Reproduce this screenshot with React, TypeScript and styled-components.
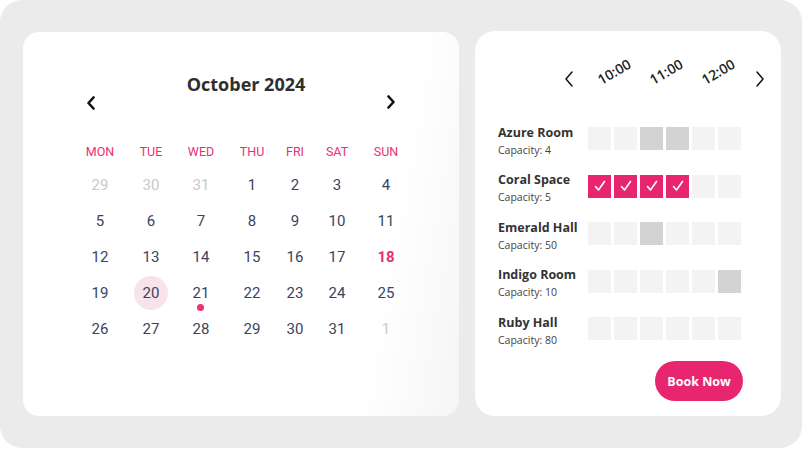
import styled, { createGlobalStyle } from "styled-components";

const GlobalStyle = createGlobalStyle`
  body {
    margin: 0;
    background: #ffffff;
  }
`;

const PINK = "#e8266f";

const Shell = styled.div`
  width: 802px;
  height: 448px;
  box-sizing: border-box;
  background: #ebebeb;
  border-radius: 22px;
  padding: 32px 0 0 23px;
  display: flex;
  align-items: flex-start;
  gap: 16px;
`;

/* ---------- calendar ---------- */

const CalendarCard = styled.section`
  width: 436px;
  height: 384px;
  box-sizing: border-box;
  border-radius: 16px;
  background: linear-gradient(100deg, #ffffff 80%, #f5f5f5 100%);
  padding: 41px 0 0 52px;
`;

const MonthHeader = styled.div`
  width: 312px;
  display: grid;
  grid-template-columns: 12px 1fr 12px;
  margin-left: 10px;
`;

const MonthTitle = styled.h2`
  margin: 0;
  padding-left: 10px;
  text-align: center;
  font-family: "Open Sans", sans-serif;
  font-weight: 700;
  font-size: 18px;
  line-height: 22px;
  color: #2e2e2e;
`;

const NavButton = styled.button<{ $top: number }>`
  border: 0;
  background: none;
  padding: 0;
  margin-top: ${(p) => p.$top}px;
  width: 12px;
  height: 14px;
  display: flex;
  align-items: center;
  justify-content: center;
  cursor: pointer;
`;

const DayGrid = styled.div`
  display: grid;
  grid-template-columns: 50px 52px 48px 54px 32px 52px 46px;
  grid-template-rows: 32px repeat(5, 36px);
  margin-top: 25px;
`;

const Weekday = styled.div`
  display: flex;
  align-items: center;
  justify-content: center;
  font-family: Roboto, sans-serif;
  font-size: 12.5px;
  color: #ec2f72;
`;

const Day = styled.div<{ $muted?: boolean; $today?: boolean; $selected?: boolean }>`
  position: relative;
  display: flex;
  align-items: center;
  justify-content: center;
  font-family: Roboto, sans-serif;
  font-size: 15px;
  font-weight: ${(p) => (p.$today ? 700 : 400)};
  color: ${(p) => (p.$today ? "#ec2f72" : p.$muted ? "#c9c9cc" : "#3c4361")};

  &::before {
    content: "";
    display: ${(p) => (p.$selected ? "block" : "none")};
    position: absolute;
    width: 34px;
    height: 34px;
    border-radius: 50%;
    background: #f8e2ec;
    left: 50%;
    top: 50%;
    transform: translate(-50%, -50%);
  }

  span {
    position: relative;
  }
`;

const EventDot = styled.i`
  position: absolute;
  left: 50%;
  top: 29px;
  width: 7px;
  height: 7px;
  margin-left: -4px;
  border-radius: 50%;
  background: #ec2f72;
`;

/* ---------- rooms ---------- */

const RoomsCard = styled.section`
  width: 306px;
  height: 385px;
  box-sizing: border-box;
  border-radius: 20px;
  background: #ffffff;
  padding: 27px 16px 0 23px;
  font-family: "Open Sans", sans-serif;
  margin-top: -1px;
`;

const TimeHeader = styled.div`
  height: 40px;
  display: flex;
  align-items: center;
  padding-left: 65px;

  svg {
    flex-shrink: 0;
    margin-top: 2px;
  }
`;

const TimeLabel = styled.div`
  width: 52px;
  text-align: center;
  font-size: 14px;
  font-weight: 600;
  color: #1f1f1f;
  transform: translateY(-7px) rotate(-30deg);
`;

const Slots = styled.div`
  display: flex;
  margin: 0 10px 0 13px;
`;

const RoomList = styled.div`
  display: grid;
  row-gap: 14.5px;
  margin-top: 25.5px;
`;

const RoomRow = styled.div`
  display: flex;
  align-items: flex-start;
`;

const RoomInfo = styled.div`
  width: 90px;
  display: flex;
  flex-direction: column;
  gap: 2px;
`;

const RoomName = styled.div`
  font-size: 12.5px;
  line-height: 17px;
  font-weight: 700;
  color: #333333;
  white-space: nowrap;
`;

const Capacity = styled.div`
  font-size: 10.5px;
  line-height: 14px;
  color: #444444;
`;

const Cells = styled.div`
  display: flex;
  gap: 3px;
  margin-top: 3.5px;
`;

const Cell = styled.div<{ $state: SlotState }>`
  width: 23px;
  height: 23px;
  background: ${(p) => (p.$state === "picked" ? PINK : p.$state === "busy" ? "#d3d3d3" : "#f3f3f3")};
  display: flex;
  align-items: center;
  justify-content: center;
`;

const Footer = styled.div`
  display: flex;
  justify-content: flex-end;
  margin: 14.5px 22px 0 0;
`;

const BookButton = styled.button`
  width: 88px;
  height: 40px;
  border: 0;
  border-radius: 20px;
  background: ${PINK};
  color: #ffffff;
  font-family: "Open Sans", sans-serif;
  font-weight: 700;
  font-size: 12.5px;
  cursor: pointer;
`;

const Chevron = ({ dir, thin }: { dir: "left" | "right"; thin?: boolean }) =>
  thin ? (
    <svg width="12" height="18" viewBox="0 0 12 18" fill="none">
      <path
        d={dir === "left" ? "M9 2 3 9l6 7" : "M3 2l6 7-6 7"}
        stroke="#111"
        strokeWidth="1.5"
        strokeLinecap="round"
        strokeLinejoin="round"
      />
    </svg>
  ) : (
    <svg width="10" height="14" viewBox="0 0 10 14" fill="none">
      <path
        d={dir === "left" ? "M7.5 1.5 2.5 7l5 5.5" : "M2.5 1.5 7.5 7l-5 5.5"}
        stroke="#111"
        strokeWidth="2.6"
        strokeLinecap="round"
        strokeLinejoin="round"
      />
    </svg>
  );

const Check = () => (
  <svg width="14" height="14" viewBox="0 0 14 14" fill="none">
    <path d="M2.5 7.5 5.5 11 11.5 2.5" stroke="#fff" strokeWidth="1.6" strokeLinecap="round" strokeLinejoin="round" />
  </svg>
);

const weekdays = ["MON", "TUE", "WED", "THU", "FRI", "SAT", "SUN"];

const days: { n: number; muted?: boolean }[] = [
  { n: 29, muted: true },
  { n: 30, muted: true },
  { n: 31, muted: true },
  ...Array.from({ length: 31 }, (_, i) => ({ n: i + 1 })),
  { n: 1, muted: true },
];

type SlotState = "free" | "busy" | "picked";

interface Room {
  name: string;
  capacity: number;
  slots: SlotState[];
}

const rooms: Room[] = [
  { name: "Azure Room", capacity: 4, slots: ["free", "free", "busy", "busy", "free", "free"] },
  { name: "Coral Space", capacity: 5, slots: ["picked", "picked", "picked", "picked", "free", "free"] },
  { name: "Emerald Hall", capacity: 50, slots: ["free", "free", "busy", "free", "free", "free"] },
  { name: "Indigo Room", capacity: 10, slots: ["free", "free", "free", "free", "free", "busy"] },
  { name: "Ruby Hall", capacity: 80, slots: ["free", "free", "free", "free", "free", "free"] },
];

export default function App() {
  return (
    <>
      <GlobalStyle />
      <Shell>
        <CalendarCard>
          <MonthHeader>
            <NavButton $top={23}>
              <Chevron dir="left" />
            </NavButton>
            <MonthTitle>October 2024</MonthTitle>
            <NavButton $top={22}>
              <Chevron dir="right" />
            </NavButton>
          </MonthHeader>
          <DayGrid>
            {weekdays.map((w) => (
              <Weekday key={w}>{w}</Weekday>
            ))}
            {days.map((d, i) => (
              <Day key={i} $muted={d.muted} $today={!d.muted && d.n === 18} $selected={!d.muted && d.n === 20}>
                <span>{d.n}</span>
                {!d.muted && d.n === 21 && <EventDot />}
              </Day>
            ))}
          </DayGrid>
        </CalendarCard>

        <RoomsCard>
          <TimeHeader>
            <Chevron dir="left" thin />
            <Slots>
              <TimeLabel>10:00</TimeLabel>
              <TimeLabel>11:00</TimeLabel>
              <TimeLabel>12:00</TimeLabel>
            </Slots>
            <Chevron dir="right" thin />
          </TimeHeader>
          <RoomList>
            {rooms.map((r) => (
              <RoomRow key={r.name}>
                <RoomInfo>
                  <RoomName>{r.name}</RoomName>
                  <Capacity>Capacity: {r.capacity}</Capacity>
                </RoomInfo>
                <Cells>
                  {r.slots.map((s, i) => (
                    <Cell key={i} $state={s}>
                      {s === "picked" && <Check />}
                    </Cell>
                  ))}
                </Cells>
              </RoomRow>
            ))}
          </RoomList>
          <Footer>
            <BookButton>Book Now</BookButton>
          </Footer>
        </RoomsCard>
      </Shell>
    </>
  );
}
